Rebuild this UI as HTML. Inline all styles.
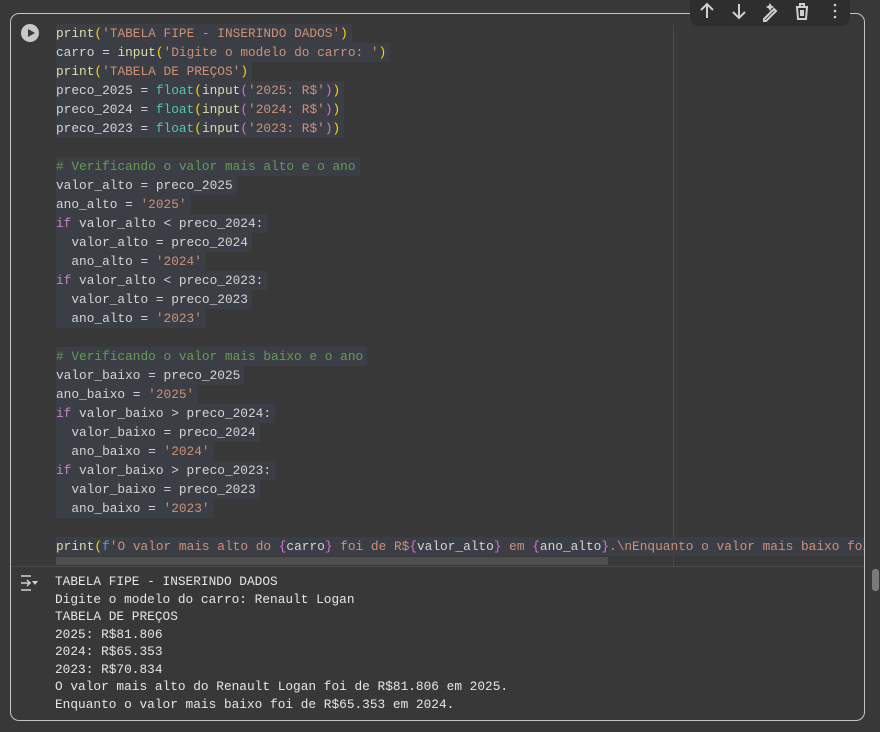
<!DOCTYPE html>
<html><head><meta charset="utf-8"><style>
html,body{margin:0;padding:0;background:#383838;width:880px;height:732px;overflow:hidden;font-family:"Liberation Mono",monospace;}
.cell{position:absolute;left:10px;top:13px;width:855px;height:708px;border:1px solid #c4c4c4;border-radius:9px;box-sizing:border-box;}
.run{position:absolute;left:21px;top:24px;width:18px;height:18px;border-radius:50%;background:#c8c8c8;}
.run:after{content:"";position:absolute;left:7px;top:4.5px;border-left:7px solid #383838;border-top:4.5px solid transparent;border-bottom:4.5px solid transparent;}
.code{position:absolute;left:56px;top:24px;font-size:12.8px;line-height:19px;color:#d4d4d4;white-space:normal;}
.code div{height:19px;white-space:pre}
.code span.l{background:#3b3e44;display:inline-block;height:19px;padding-right:4px}
.f{color:#dcdcaa}.s{color:#ce9178}.c{color:#4ec9b0}.y{color:#ffd700}.m{color:#da70d6}.g{color:#6a9955}.k{color:#c586c0}.b{color:#569cd6}
.ruler{position:absolute;left:673px;top:25px;width:1px;height:541px;background:#4a4a4a}
.hs{position:absolute;left:56px;top:557px;width:552px;height:8px;background:#4f4f4f}
.sep{position:absolute;left:11px;top:566px;width:853px;height:1px;background:#4a4a4a}
.out{position:absolute;left:55px;top:573px;font-size:12.8px;line-height:17.5px;color:#e6e6e6;white-space:pre;}
.tb{position:absolute;left:690px;top:0;width:160px;height:26px;background:#2e2e2e;border-radius:0 0 8px 8px;}
.vs{position:absolute;left:872px;top:569px;width:7px;height:22px;background:#7a7a7a;border-radius:3px}
</style></head><body>
<div class="cell"></div>
<div class="tb">
<svg width="160" height="26" viewBox="0 0 160 26" fill="none" stroke="#cfcfcf" stroke-width="2">
<path d="M17 18V4M11 10l6-6 6 6"/>
<path d="M49 4v14M43 12l6 6 6-6"/>
<path d="M74 19l10-10 2 2-10 10h-2z" /><path d="M80 4l1 2 2 1-2 1-1 2-1-2-2-1 2-1z" fill="#cfcfcf" stroke-width="1"/>
<path d="M106 7h12M110 7V4h4v3M107 7l1 12h8l1-12M111 10v6M113 10v6"/>
<circle cx="145" cy="5" r="1.3" fill="#cfcfcf" stroke="none"/><circle cx="145" cy="11" r="1.3" fill="#cfcfcf" stroke="none"/><circle cx="145" cy="17" r="1.3" fill="#cfcfcf" stroke="none"/>
</svg></div>
<div class="run"></div>
<div class="ruler"></div>
<div class="code"><div><span class="l"><span class="f">print</span><span class="y">(</span><span class="s">'TABELA FIPE - INSERINDO DADOS'</span><span class="y">)</span></span></div><div><span class="l">carro = <span class="f">input</span><span class="y">(</span><span class="s">'Digite o modelo do carro: '</span><span class="y">)</span></span></div><div><span class="l"><span class="f">print</span><span class="y">(</span><span class="s">'TABELA DE PREÇOS'</span><span class="y">)</span></span></div><div><span class="l">preco_2025 = <span class="c">float</span><span class="y">(</span><span class="f">input</span><span class="m">(</span><span class="s">'2025: R$'</span><span class="m">)</span><span class="y">)</span></span></div><div><span class="l">preco_2024 = <span class="c">float</span><span class="y">(</span><span class="f">input</span><span class="m">(</span><span class="s">'2024: R$'</span><span class="m">)</span><span class="y">)</span></span></div><div><span class="l">preco_2023 = <span class="c">float</span><span class="y">(</span><span class="f">input</span><span class="m">(</span><span class="s">'2023: R$'</span><span class="m">)</span><span class="y">)</span></span></div><div></div><div><span class="l"><span class="g"># Verificando o valor mais alto e o ano</span></span></div><div><span class="l">valor_alto = preco_2025</span></div><div><span class="l">ano_alto = <span class="s">'2025'</span></span></div><div><span class="l"><span class="k">if</span> valor_alto &lt; preco_2024:</span></div><div><span class="l">  valor_alto = preco_2024</span></div><div><span class="l">  ano_alto = <span class="s">'2024'</span></span></div><div><span class="l"><span class="k">if</span> valor_alto &lt; preco_2023:</span></div><div><span class="l">  valor_alto = preco_2023</span></div><div><span class="l">  ano_alto = <span class="s">'2023'</span></span></div><div></div><div><span class="l"><span class="g"># Verificando o valor mais baixo e o ano</span></span></div><div><span class="l">valor_baixo = preco_2025</span></div><div><span class="l">ano_baixo = <span class="s">'2025'</span></span></div><div><span class="l"><span class="k">if</span> valor_baixo &gt; preco_2024:</span></div><div><span class="l">  valor_baixo = preco_2024</span></div><div><span class="l">  ano_baixo = <span class="s">'2024'</span></span></div><div><span class="l"><span class="k">if</span> valor_baixo &gt; preco_2023:</span></div><div><span class="l">  valor_baixo = preco_2023</span></div><div><span class="l">  ano_baixo = <span class="s">'2023'</span></span></div><div></div><div style="width:808px;overflow:hidden"><span class="l" style="padding-right:0"><span class="f">print</span><span class="y">(</span><span class="b">f</span><span class="s">'O valor mais alto do </span><span class="m">{</span>carro<span class="m">}</span><span class="s"> foi de R$</span><span class="m">{</span>valor_alto<span class="m">}</span><span class="s"> em </span><span class="m">{</span>ano_alto<span class="m">}</span><span class="s">.\nEnquanto o valor mais baixo foi</span></span></div></div>
<div class="hs"></div>
<div class="sep"></div>
<div class="vs"></div>
<svg style="position:absolute;left:20px;top:575px" width="20" height="16" fill="none" stroke="#cfcfcf" stroke-width="1.5"><path d="M1 1h10M1 15h10M1 8h8M7 5l3 3-3 3"/><path d="M12 6h6l-3 4z" fill="#cfcfcf" stroke="none"/></svg>
<div class="out">TABELA FIPE - INSERINDO DADOS
Digite o modelo do carro: Renault Logan
TABELA DE PREÇOS
2025: R$81.806
2024: R$65.353
2023: R$70.834
O valor mais alto do Renault Logan foi de R$81.806 em 2025.
Enquanto o valor mais baixo foi de R$65.353 em 2024.</div>
</body></html>
